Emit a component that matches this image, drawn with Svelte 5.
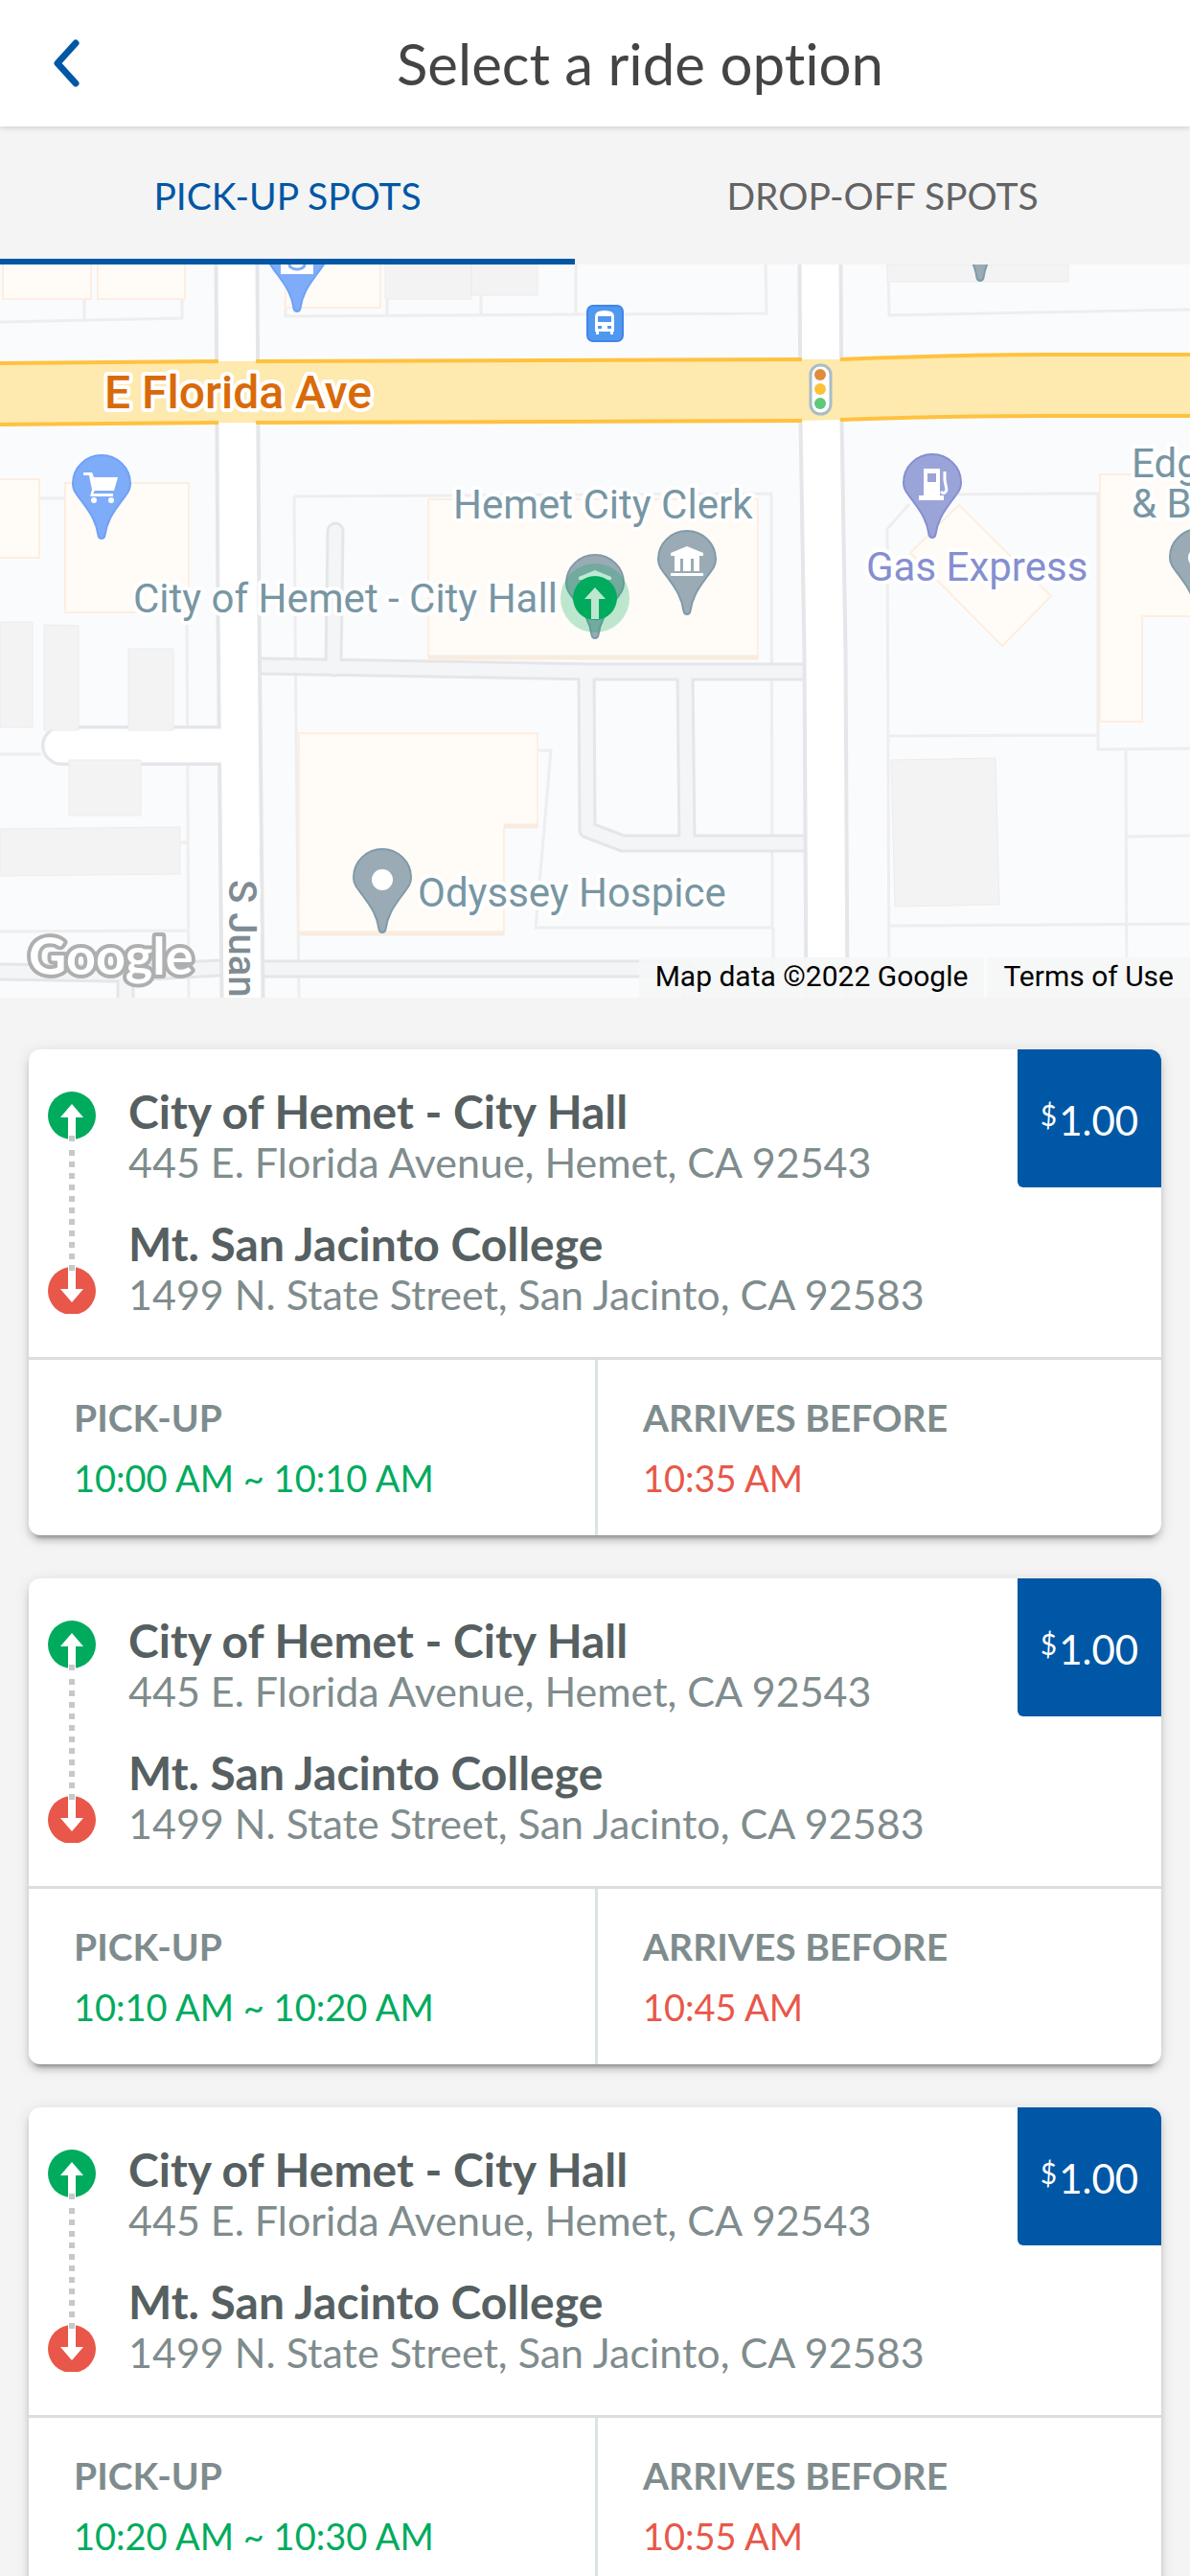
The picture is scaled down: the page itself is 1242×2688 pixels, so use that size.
<script>
  const tabs = [
    { id: 'pickup', label: 'PICK-UP SPOTS' },
    { id: 'dropoff', label: 'DROP-OFF SPOTS' }
  ];
  let active = $state('pickup');

  const from = { name: 'City of Hemet - City Hall', address: '445 E. Florida Avenue, Hemet, CA 92543' };
  const to = { name: 'Mt. San Jacinto College', address: '1499 N. State Street, San Jacinto, CA 92583' };
  const rides = [
    { from, to, price: '1.00', pickup: '10:00 AM ~ 10:10 AM', arrives: '10:35 AM' },
    { from, to, price: '1.00', pickup: '10:10 AM ~ 10:20 AM', arrives: '10:45 AM' },
    { from, to, price: '1.00', pickup: '10:20 AM ~ 10:30 AM', arrives: '10:55 AM' }
  ];

  const pinShape = 'M0 0C-2 0-3-1-3.500-3.500C-6-20-13-28-20-38C-26-46-30-50-30-57.500A30 29.500 0 0 1 30-57.500C30-50 26-46 20-38C13-28 6-20 3.500-3.500C3-1 2 0 0 0Z';
  const dots = [46, 61, 73, 85, 97, 109, 121, 133, 145, 157, 169, 181];
</script>

{#snippet pin(x, y, kind)}
  <g class="pin {kind}" transform="translate({x} {y})">
    <path d={pinShape} />
  </g>
{/snippet}

{#snippet temple(x, y)}
  <g class="glyph" transform="translate({x} {y})">
    <path d="M0-14L17-7V-4H-17V-7ZM-13-4H-7V12H-13ZM-4-4H4V12H-4ZM7-4H13V12H7ZM-17 14H17V17H-17ZM-12-4H12V-1H-12Z" />
  </g>
{/snippet}

<div class="app">
  <header class="bar">
    <button class="back" aria-label="Back">
      <svg width="30" height="50" viewBox="0 0 30 50"><path d="M25 4L6 25L25 46" /></svg>
    </button>
    <h1>Select a ride option</h1>
  </header>

  <div class="tabs" role="tablist">
    {#each tabs as tab}
      <button
        class="tab {tab.id}"
        class:active={active === tab.id}
        role="tab"
        aria-selected={active === tab.id}
        onclick={() => (active = tab.id)}>{tab.label}</button>
    {/each}
  </div>

  <section class="map" aria-label="Map">
    <svg class="tiles" viewBox="0 276 1242 765">
      <rect class="land" x="0" y="276" width="1242" height="765" />

      <g class="parcel">
        <path d="M0 336L190 332V312M88 312V334M195 639L197 1041M0 787H43M188 879H197M0 972L197 971M41 520H195V639" />
        <path d="M298 312V330L612 328L800 327L799 276M404 312V329M502 276V328M601 276V328" />
        <path d="M927 276L928 329L1242 323" />
        <path d="M307 518L805 515L806 968M307 518L309 760L312 1041M561 783H575L559 968H806M807 968V1041" />
        <path d="M949 526L926 552L928 1041M1000 516L1242 514M1146 515V782L1242 781M928 768L1146 767M1175 782L1176 1041M1175 873L1242 872M928 966L1242 964" />
      </g>

      <g class="alley edge">
        <path d="M271 695L621 701H842M612 701L613 866L650 880H842M715 701L717 880M350 554L348 697" />
        <path d="M0 1014L120 1016L228 1010M131 1016V1041M274 1011H705Q722 1011 722 1030V1041" />
      </g>
      <g class="alley fill">
        <path d="M271 695L621 701H842M612 701L613 866L650 880H842M715 701L717 880M350 554L348 697" />
        <path d="M0 1014L120 1016L228 1010M131 1016V1041M274 1011H705Q722 1011 722 1030V1041" />
      </g>

      <path class="road edge" d="M247 276L249 640L253 1041M856 276L857 440L861 680L863 1041" />
      <path class="culdesac edge" d="M247 778H64" />
      <path class="road fill" d="M247 276L249 640L253 1041M856 276L857 440L861 680L863 1041" />
      <path class="culdesac fill" d="M247 778H64" />

      <g class="block">
        <path d="M402 276H492V312H402ZM492 276H561V308H492ZM926 276H1115V294H926Z" />
        <path d="M0 649H34V759H0ZM46 652L82 653V762H46ZM134 677H181V762H134ZM72 793H147V851H72ZM0 865L188 863V912L0 914Z" />
        <path d="M930 793L1039 791L1043 944L934 946Z" />
      </g>
      <g class="shop">
        <path d="M3 270H95V312H3ZM102 270H193V312H102ZM298 270H397V321H298Z" />
        <path d="M-4 500H41V582H-4ZM68 504H197V639H68Z" />
        <path d="M447 521H791V686H447ZM312 765H561V863H526V974H312Z" />
        <path d="M1001 527L1097 622L1046 674L950 577ZM1148 495H1250V643H1192V753H1148Z" />
      </g>
      <path class="shade" d="M447 686H791M526 862H561M312 974H526" />

      <path class="avenue" d="M0 379L228 377L837 375L877 375L1090 370H1242V434H1090L877 438L837 439L267 441L0 443Z" />
      <path class="curb" d="M0 379L228 377M267 377L837 375M877 375Q1000 370 1090 370H1242M0 443L228 441M267 441L837 439M877 438Q1000 434 1090 434H1242" />

      {@render pin(310, 325, 'blue')}
      <path class="glyph" d="M293 270H327V286H293Z" />
      <path class="bag" d="M302 276A8 5 0 0 0 318 276" />
      {@render pin(1023, 293, 'slate')}

      <rect class="bus" x="613" y="319" width="37" height="37" rx="6" />
      <path class="glyph" d="M621 330Q621 324 631 324Q641 324 641 330V346H640V349H637V346H625V349H622V346H621Z" />
      <path class="busfill" d="M624 330H638V336H624ZM624 340H628V343H624ZM634 340H638V343H634Z" />

      <rect class="signal" x="846" y="381" width="21" height="51" rx="10" />
      <circle class="red" cx="856" cy="391" r="6" />
      <circle class="amber" cx="856" cy="406" r="6" />
      <circle class="green" cx="856" cy="421" r="6" />

      {@render pin(106, 562, 'blue')}
      <g class="glyph" transform="translate(106 507)">
        <path d="M-19-14H-10L-8-9H17L13 5H-7L-9 8H12V11H-12L-10 4L-13-11H-19Z" />
        <circle cx="-8" cy="15" r="3" /><circle cx="10" cy="15" r="3" />
      </g>

      {@render pin(973, 561, 'violet')}
      <g transform="translate(973 507)">
        <path class="glyph" d="M-9-18H8V10H12V15H-14V10H-9Z" />
        <path class="window" d="M-5-13H4V-4H-5Z" />
        <path class="hose" d="M13-15V-6L15 4Q13 10 9 6" />
      </g>

      {@render pin(621, 666, 'slate')}
      {@render temple(621, 609)}
      {@render pin(717, 641, 'slate')}
      {@render temple(717, 584)}
      {@render pin(1251, 639, 'slate')}
      <circle class="glyph" cx="1251" cy="582" r="11" />
      {@render pin(399, 973, 'slate')}
      <circle class="glyph" cx="399" cy="918" r="11" />

      <text class="avenue-name" x="109" y="426">E Florida Ave</text>
      <text class="place" x="473" y="541">Hemet City Clerk</text>
      <text class="place" x="139" y="639">City of Hemet - City Hall</text>
      <text class="place gas" x="904" y="606">Gas Express</text>
      <text class="place" x="1181" y="498">Edg</text>
      <text class="place" x="1181" y="540">&amp; B</text>
      <text class="place" x="436" y="946">Odyssey Hospice</text>
      <text class="street" transform="translate(239 918) rotate(90)">S Juan</text>

      <circle class="halo" cx="621" cy="624" r="36" />
      <circle class="spot" cx="621" cy="624" r="23" />
      <path class="spot-arrow" d="M621 613L632 625H625V646H617V625H610Z" />

      <text class="logo" x="30" y="1017">Google</text>
    </svg>
    <div class="credits">
      <span>Map data ©2022 Google</span>
      <a href="#terms">Terms of Use</a>
    </div>
  </section>

  <ul class="rides">
    {#each rides as ride}
      <li class="card">
        <div class="route">
          <svg class="track" width="50" height="232" viewBox="0 0 50 232" aria-hidden="true">
            <circle class="start" cx="25" cy="25" r="25" />
            <path class="arrow" d="M25 13L37 27H29V50H21V27H13Z" />
            <circle class="end" cx="25" cy="208" r="25" />
            <path class="arrow" d="M25 220L37 206H29V182H21V206H13Z" />
            {#each dots as y}<rect class="dot" x="22" {y} width="6" height="6" />{/each}
          </svg>
          <div class="stops">
            {#each [ride.from, ride.to] as stop}
              <div>
                <h2>{stop.name}</h2>
                <p>{stop.address}</p>
              </div>
            {/each}
          </div>
          <div class="price"><span class="currency">$</span>{ride.price}</div>
        </div>
        <dl class="times">
          <div>
            <dt>PICK-UP</dt>
            <dd class="pickup-time">{ride.pickup}</dd>
          </div>
          <div>
            <dt>ARRIVES BEFORE</dt>
            <dd class="arrive-time">{ride.arrives}</dd>
          </div>
        </dl>
      </li>
    {/each}
  </ul>
</div>

<style>
  :global(body) { margin: 0; background: #f4f4f4; }
  h1, h2, p, dl, dd, ul { margin: 0; padding: 0; }
  button { border: 0; padding: 0; background: none; font: inherit; cursor: pointer; }

  .app {
    display: flex;
    flex-direction: column;
    height: 100vh;
    background: #f4f4f4;
    font-family: Lato, 'Liberation Sans', sans-serif;
    font-variant-ligatures: none;
  }

  .bar {
    display: flex;
    align-items: center;
    flex: none;
    height: 132px;
    background: #fff;
    box-shadow: 0 1px 6px rgba(0, 0, 0, 0.18);
    z-index: 1;
  }
  .back { display: flex; width: 94px; padding-left: 54px; box-sizing: border-box; }
  .back path { fill: none; stroke: #0057a5; stroke-width: 7; stroke-linecap: round; stroke-linejoin: round; }
  h1 { flex: 1; text-align: center; font-size: 60px; line-height: 72px; font-weight: 400; color: #444; }

  .tabs { display: flex; flex: none; height: 144px; }
  .tab {
    font-size: 39px;
    line-height: 48px;
    color: #636363;
  }
  .tab.pickup { flex: 100 1 0; }
  .tab.dropoff { flex: 107 1 0; }
  .tab.active { color: #0057a5; box-shadow: inset 0 -6px #0057a5; }

  .map { position: relative; flex: none; font-family: Roboto, 'Liberation Sans', sans-serif; }
  .tiles { display: block; width: 100%; }
  .land { fill: #fafbfd; }
  .parcel { fill: none; stroke: #eeeeef; stroke-width: 3; }
  .alley { fill: none; stroke-linecap: round; stroke-linejoin: round; }
  .alley.edge { stroke: #e5e6e9; stroke-width: 19; }
  .alley.fill { stroke: #f4f5f7; stroke-width: 13; }
  .road, .culdesac { fill: none; stroke-linecap: round; }
  .road.edge { stroke: #e5e6e9; stroke-width: 47; }
  .road.fill { stroke: #fff; stroke-width: 39; }
  .culdesac.edge { stroke: #e5e6e9; stroke-width: 42; }
  .culdesac.fill { stroke: #fff; stroke-width: 35; }
  .block { fill: #f3f3f3; stroke: #ececed; stroke-width: 1; }
  .shop { fill: #fffbf6; stroke: #feeee0; stroke-width: 2; }
  .shade { fill: none; stroke: #f9ebdf; stroke-width: 5; }
  .avenue { fill: #fee9ae; }
  .curb { fill: none; stroke: #ffc23f; stroke-width: 4; }
  .pin { stroke-width: 2; }
  .blue { fill: #7facf8; stroke: #6fa1f7; }
  .slate { fill: #9aabb5; stroke: #7f9aa8; }
  .violet { fill: #9aa4d8; stroke: #858fd0; }
  .glyph { fill: #fff; }
  .bag { fill: none; stroke: #7facf8; stroke-width: 3; }
  .bus { fill: #5097f0; stroke: #4285e8; stroke-width: 2; }
  .busfill { fill: #5097f0; }
  .window { fill: #9aa4d8; }
  .hose { fill: none; stroke: #fff; stroke-width: 3; }
  .signal { fill: #fff; stroke: #a9bcc6; stroke-width: 3; }
  .red { fill: #e18b3e; }
  .amber { fill: #fdc13a; }
  .green { fill: #5dc97a; }
  .place, .avenue-name, .street {
    paint-order: stroke;
    stroke: #fff;
    stroke-width: 8;
    stroke-linejoin: round;
    fill: #7896a3;
    font-size: 42px;
  }
  .place.gas { fill: #858fd0; }
  .avenue-name { fill: #d96a09; font-weight: 500; font-size: 48px; }
  .street { fill: #7f8b93; font-weight: 500; font-size: 40px; }
  .halo { fill: #00ab5e; fill-opacity: 0.26; }
  .spot { fill: #00ab5e; }
  .spot-arrow { fill: #bde6d0; }
  .logo {
    font-family: Lato, sans-serif;
    font-size: 54px;
    font-weight: 700;
    fill: #fff;
    stroke: #aeafb0;
    stroke-width: 8;
    stroke-linejoin: round;
    paint-order: stroke;
  }
  .credits {
    position: absolute;
    right: 0;
    bottom: 0;
    display: flex;
    gap: 3px;
    font-size: 30px;
    line-height: 40px;
    color: #000;
  }
  .credits > * { padding: 0 17px 2px; background: rgba(245, 246, 246, 0.9); }
  .credits a { color: inherit; text-decoration: none; }

  .rides {
    flex: 1;
    min-height: 0;
    overflow-y: auto;
    scrollbar-width: none;
    display: flex;
    flex-direction: column;
    gap: 45px;
    padding: 54px 30px;
    list-style: none;
  }
  .card {
    flex: none;
    overflow: hidden;
    border-radius: 12px;
    background: #fff;
    box-shadow: 0 9px 3px -6px rgba(0, 0, 0, 0.2), 0 6px 6px 0 rgba(0, 0, 0, 0.14), 0 3px 15px 0 rgba(0, 0, 0, 0.12);
  }
  .route { display: flex; border-bottom: 3px solid #dcdddd; }
  .track { flex: none; margin: 44px 34px 0 20px; }
  .start { fill: #00ab5e; }
  .end { fill: #e85749; }
  .arrow { fill: #fff; }
  .dot { fill: #c5c9c9; }
  .stops { flex: 1; display: flex; flex-direction: column; gap: 32px; padding: 37px 0 40px; }
  h2 { font-size: 48px; line-height: 56px; font-weight: 700; color: #565f61; }
  .stops p { font-size: 43px; line-height: 50px; color: #7f8c8d; }
  .price {
    display: flex;
    align-items: center;
    justify-content: center;
    align-self: flex-start;
    box-sizing: border-box;
    width: 150px;
    height: 144px;
    margin-left: -100px;
    padding-top: 4px;
    border-bottom-left-radius: 6px;
    background: #0057a5;
    color: #fff;
    font-size: 42px;
    line-height: 50px;
  }
  .currency { padding: 0 2px 12px 0; font-size: 30px; line-height: 36px; }

  .times { display: grid; grid-template-columns: 1fr 1fr; line-height: 48px; }
  .times > div { padding: 36px 47px; }
  .times > div + div { border-left: 3px solid #dbe3e5; }
  dt { margin-bottom: 15px; font-size: 39px; font-weight: 700; color: #7f8c8d; }
  dd { font-size: 38px; }
  .pickup-time { color: #00ab5e; }
  .arrive-time { color: #e85749; }
</style>
